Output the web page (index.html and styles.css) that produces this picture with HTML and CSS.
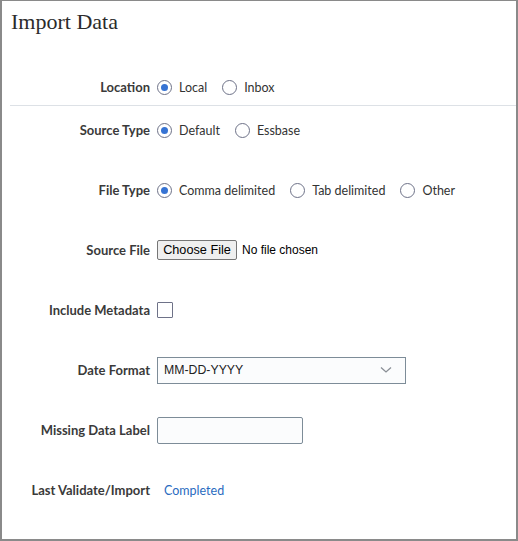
FILE: index.html
```html
<!DOCTYPE html>
<html>
<head>
<meta charset="utf-8">
<link rel="stylesheet" href="styles.css">
</head>
<body>
<div class="panel">
  <h1 class="title">Import Data</h1>
  <div class="row row-location">
    <div class="label">Location</div>
    <div class="field">
      <label class="opt"><span class="radio checked"></span>Local</label>
      <label class="opt"><span class="radio"></span>Inbox</label>
    </div>
  </div>
  <div class="divider"></div>
  <div class="row first">
    <div class="label">Source Type</div>
    <div class="field">
      <label class="opt"><span class="radio checked"></span>Default</label>
      <label class="opt"><span class="radio"></span>Essbase</label>
    </div>
  </div>
  <div class="row">
    <div class="label">File Type</div>
    <div class="field">
      <label class="opt"><span class="radio checked"></span>Comma delimited</label>
      <label class="opt"><span class="radio"></span>Tab delimited</label>
      <label class="opt"><span class="radio"></span>Other</label>
    </div>
  </div>
  <div class="row">
    <div class="label">Source File</div>
    <div class="field">
      <span class="filebtn">Choose File</span><span class="nofile">No file chosen</span>
    </div>
  </div>
  <div class="row">
    <div class="label">Include Metadata</div>
    <div class="field"><span class="checkbox"></span></div>
  </div>
  <div class="row">
    <div class="label">Date Format</div>
    <div class="field">
      <div class="select">
        <span>MM-DD-YYYY</span>
        <svg class="chev" width="12" height="8" viewBox="0 0 12 8"><path d="M1 1.5 L6 6 L11 1.5" fill="none" stroke="#8a8f96" stroke-width="1.3"/></svg>
      </div>
    </div>
  </div>
  <div class="row">
    <div class="label">Missing Data Label</div>
    <div class="field"><div class="textbox"></div></div>
  </div>
  <div class="row">
    <div class="label">Last Validate/Import</div>
    <div class="field"><span class="link">Completed</span></div>
  </div>
</div>
</body>
</html>
```
FILE: styles.css
```css
html, body {
  margin: 0;
  padding: 0;
  background: #fff;
}
.panel {
  box-sizing: border-box;
  width: 518px;
  height: 541px;
  border: 2px solid #8a8a8a;
  border-top-width: 1px;
  font-family: Lato, "Noto Sans", sans-serif;
  font-size: 13px;
  color: #333;
}
.title {
  margin: 0;
  padding: 9px 0 0 9px;
  height: 30px;
  font-family: "Liberation Serif", "Times New Roman", serif;
  font-weight: normal;
  font-size: 22px;
  color: #2b2b2b;
  line-height: 24px;
}
.row {
  display: flex;
  align-items: center;
  height: 20px;
  margin-top: 40px;
}
.row-location {
  margin-top: 37px;
}
.row.first {
  margin-top: 14px;
}
.label {
  width: 148px;
  text-align: right;
  font-weight: bold;
  color: #3a3a3a;
  flex: none;
}
.field {
  display: flex;
  align-items: center;
  margin-left: 7px;
  font-size: 12.5px;
}
.divider {
  margin: 8px 0 0 8px;
  height: 1px;
  background: #dde1e6;
}
.opt {
  display: flex;
  align-items: center;
  margin-right: 15px;
  color: #333;
}
.radio {
  box-sizing: border-box;
  width: 15px;
  height: 15px;
  border: 1px solid #6e7288;
  border-radius: 50%;
  margin-right: 7px;
  position: relative;
  background: #fff;
}
.radio.checked::after {
  content: "";
  position: absolute;
  left: 3px;
  top: 3px;
  width: 7px;
  height: 7px;
  border-radius: 50%;
  background: #3673d3;
}
.filebtn {
  box-sizing: border-box;
  width: 80px;
  height: 20px;
  text-align: center;
  border: 1px solid #767676;
  border-radius: 2px;
  background: #efefef;
  font-family: "Liberation Sans", Arial, sans-serif;
  font-size: 12.7px;
  line-height: 18px;
  color: #000;
}
.nofile {
  margin-left: 5px;
  font-family: "Liberation Sans", Arial, sans-serif;
  font-size: 12px;
  color: #000;
}
.checkbox {
  box-sizing: border-box;
  width: 16px;
  height: 16px;
  border: 1px solid #6e7288;
  border-radius: 1px;
  background: #fff;
}
.select {
  box-sizing: border-box;
  width: 249px;
  height: 27px;
  border: 1px solid #7d8c98;
  background: #fbfcfd;
  display: flex;
  align-items: center;
  justify-content: space-between;
  padding: 0 13px 0 6px;
  font-family: "Liberation Sans", Arial, sans-serif;
  font-size: 12.3px;
  color: #222;
}
.textbox {
  box-sizing: border-box;
  width: 146px;
  height: 27px;
  border: 1px solid #7d8c98;
  border-radius: 2px;
  background: #fbfcfd;
}
.link {
  margin-left: 7px;
  color: #2a6bbf;
}
```
